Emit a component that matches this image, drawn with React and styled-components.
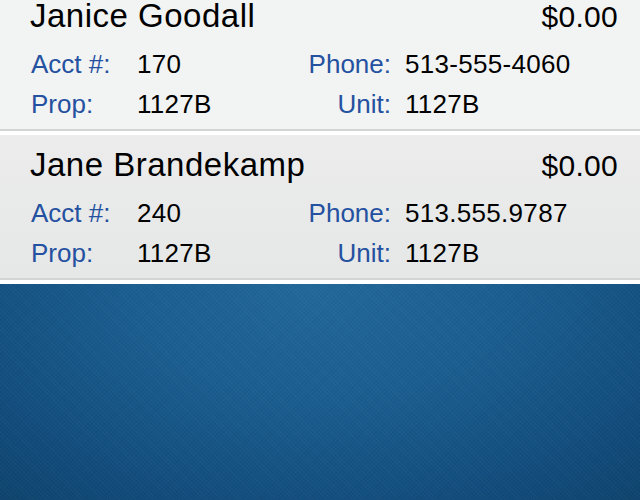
import React from 'react';
import styled, { createGlobalStyle } from 'styled-components';

const GlobalStyle = createGlobalStyle`
  html, body {
    margin: 0;
    padding: 0;
    height: 100%;
  }
  body {
    font-family: 'Liberation Sans', Arial, sans-serif;
    -webkit-font-smoothing: antialiased;
  }
  #root {
    height: 100%;
  }
`;

const Screen = styled.div`
  height: 100vh;
  display: flex;
  flex-direction: column;
  overflow: hidden;
`;

// list is scrolled a little, so the first row starts above the top edge
const List = styled.div`
  margin-top: -14px;
  display: flex;
  flex-direction: column;
`;

const Row = styled.div`
  padding: 14px 22px 5px 30px;
  background: ${({ selected }) =>
    selected ? 'linear-gradient(#ececec, #e6e7e7)' : '#f2f3f3'};
  border-bottom: 2px solid #d3d4d4;
  box-shadow: 0 4px 0 #ffffff;
  margin-bottom: 4px;
`;

const Header = styled.div`
  display: flex;
  justify-content: space-between;
  align-items: baseline;
  height: 32px;
  line-height: 32px;
  margin-bottom: 12px;
  color: #000;
`;

const Name = styled.span`
  font-size: 33px;
  letter-spacing: 0.5px;
`;

const Amount = styled.span`
  font-size: 30px;
  letter-spacing: 0.3px;
`;

const Details = styled.div`
  display: grid;
  grid-template-columns: 107px 104px 164px 1fr;
  grid-auto-rows: 40px;
  line-height: 40px;
  font-size: 26px;
  letter-spacing: 0.3px;
`;

const Label = styled.span`
  color: #2451a0;
  letter-spacing: 0;
  text-align: ${({ right }) => (right ? 'right' : 'left')};
  padding-right: ${({ right }) => (right ? '14px' : '0')};
  padding-left: ${({ right }) => (right ? '0' : '1px')};
`;

const Value = styled.span`
  color: #000;
`;

const Backdrop = styled.div`
  flex: 1;
  background-color: #114d7c;
  background-image:
    repeating-linear-gradient(45deg, rgba(255, 255, 255, 0.025) 0 1px, transparent 1px 3px),
    repeating-linear-gradient(-45deg, rgba(0, 0, 0, 0.035) 0 1px, transparent 1px 3px),
    radial-gradient(ellipse 85% 150% at 50% 0%, #22689b 0%, #1b5e90 35%, #134f80 65%, #0c3f66 100%);
`;

const tenants = [
  { name: 'Janice Goodall', amount: '$0.00', acct: '170', phone: '513-555-4060', prop: '1127B', unit: '1127B' },
  { name: 'Jane Brandekamp', amount: '$0.00', acct: '240', phone: '513.555.9787', prop: '1127B', unit: '1127B', selected: true },
];

const App = () => {
  return (
    <Screen>
      <GlobalStyle />
      <List>
        {tenants.map((t, index) => (
          <Row key={index} selected={t.selected}>
            <Header>
              <Name>{t.name}</Name>
              <Amount>{t.amount}</Amount>
            </Header>
            <Details>
              <Label>Acct #:</Label>
              <Value>{t.acct}</Value>
              <Label right>Phone:</Label>
              <Value>{t.phone}</Value>
              <Label>Prop:</Label>
              <Value>{t.prop}</Value>
              <Label right>Unit:</Label>
              <Value>{t.unit}</Value>
            </Details>
          </Row>
        ))}
      </List>
      <Backdrop />
    </Screen>
  );
};

export default App;
